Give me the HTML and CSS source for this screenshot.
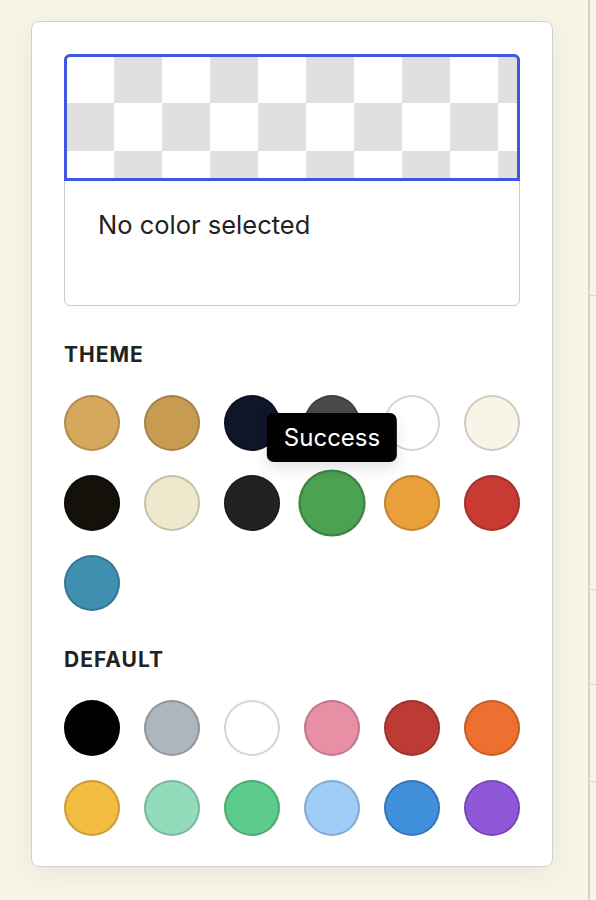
FILE: index.html
```html
<!DOCTYPE html>
<html lang="en">
<head>
    <meta charset="UTF-8">
    <meta name="viewport" content="width=device-width, initial-scale=1.0">
    <title>Color picker</title>
    <link rel="stylesheet" href="styles.css">
</head>
<body>
    <div class="popover">
        <div class="preview">
            <div class="preview-checker"></div>
            <div class="preview-label">No color selected</div>
        </div>

        <div class="section">
            <div class="section-title">THEME</div>
            <div class="swatches">
                <button class="swatch" style="--swatch: #d6a85e" title="Primary"></button>
                <button class="swatch" style="--swatch: #c89b52" title="Primary dark"></button>
                <button class="swatch" style="--swatch: #101629" title="Secondary"></button>
                <button class="swatch" style="--swatch: #4a4a4a" title="Neutral"></button>
                <button class="swatch" style="--swatch: #ffffff" title="Base"></button>
                <button class="swatch" style="--swatch: #f8f5e8" title="Base 2"></button>

                <button class="swatch" style="--swatch: #14110a" title="Base content"></button>
                <button class="swatch" style="--swatch: #efe8cc" title="Base 3"></button>
                <button class="swatch" style="--swatch: #222222" title="Dark"></button>
                <div class="swatch-wrap">
                    <button class="swatch is-hover" style="--swatch: #4ca152"></button>
                    <div class="tooltip">Success</div>
                </div>
                <button class="swatch" style="--swatch: #e9a03a" title="Warning"></button>
                <button class="swatch" style="--swatch: #c93a33" title="Error"></button>

                <button class="swatch" style="--swatch: #3f8fb0" title="Info"></button>
            </div>
        </div>

        <div class="section">
            <div class="section-title">DEFAULT</div>
            <div class="swatches">
                <button class="swatch" style="--swatch: #000000" title="Black"></button>
                <button class="swatch" style="--swatch: #adb5bf" title="Gray"></button>
                <button class="swatch" style="--swatch: #ffffff" title="White"></button>
                <button class="swatch" style="--swatch: #e88fa6" title="Pink"></button>
                <button class="swatch" style="--swatch: #bd3b36" title="Red"></button>
                <button class="swatch" style="--swatch: #ee7030" title="Orange"></button>

                <button class="swatch" style="--swatch: #f2bd42" title="Yellow"></button>
                <button class="swatch" style="--swatch: #94dbbc" title="Mint"></button>
                <button class="swatch" style="--swatch: #5ccb8c" title="Green"></button>
                <button class="swatch" style="--swatch: #9fcdf8" title="Light blue"></button>
                <button class="swatch" style="--swatch: #4090dc" title="Blue"></button>
                <button class="swatch" style="--swatch: #9057d8" title="Purple"></button>
            </div>
        </div>
    </div>

    <div class="sidebar">
        <div class="sidebar-row row-1"></div>
        <div class="sidebar-row row-2"></div>
        <div class="sidebar-row row-3"></div>
        <div class="sidebar-row row-4"></div>
    </div>
</body>
</html>
```

FILE: styles.css
```css
* {
    box-sizing: border-box;
}

body {
    font-family: Inter, 'Noto Sans', sans-serif;
    margin: 0;
    padding: 0;
    height: 100vh;
    overflow: hidden;
    background: #f8f5e8;
    color: #222222;
    display: flex;
}

/* Popover card */
.popover {
    flex: none;
    align-self: flex-start;
    width: 522px;
    margin: 21px 0 0 31px;
    padding: 32px 32px 30px 32px;
    background: #ffffff;
    border: 1px solid #cfcfcf;
    border-radius: 8px;
    box-shadow: 0 8px 30px rgba(60, 50, 20, 0.08);
}

/* Preview box */
.preview {
    height: 252px;
    border: 1px solid #c9c9c9;
    border-radius: 6px;
    display: flex;
    flex-direction: column;
}

.preview-checker {
    height: 127px;
    margin: -1px -1px 0 -1px;
    border: 3px solid #3d57e0;
    border-radius: 6px 6px 0 0;
    background-color: #ffffff;
    background-image: conic-gradient(#e0e0e0 0 25%, #ffffff 0 50%, #e0e0e0 0 75%, #ffffff 0);
    background-size: 96px 96px;
    background-position: -1px -2px;
}

.preview-label {
    padding: 29px 33px;
    font-size: 25.5px;
    line-height: 29px;
    color: #222222;
}

/* Sections */
.section {
    margin-top: 37px;
}

.section-title {
    font-size: 21px;
    line-height: 24px;
    font-weight: 700;
    letter-spacing: 1px;
    color: #222222;
    margin-bottom: 28px;
}

.swatches {
    display: grid;
    grid-template-columns: repeat(6, 56px);
    gap: 24px;
}

.swatch {
    width: 56px;
    height: 56px;
    padding: 0;
    border: none;
    border-radius: 50%;
    background: var(--swatch);
    box-shadow: inset 0 0 0 2px rgba(0, 0, 0, 0.17);
    cursor: pointer;
    display: block;
    transition: transform 0.15s ease-out;
}

.swatch.is-hover {
    transform: scale(1.2);
}

.swatch-wrap {
    position: relative;
    width: 56px;
    height: 56px;
}

/* Tooltip */
.tooltip {
    position: absolute;
    left: 50%;
    bottom: calc(100% + 13px);
    transform: translateX(-50%);
    height: 49px;
    padding: 0 17px;
    background: #000000;
    color: #ffffff;
    font-size: 24px;
    line-height: 49px;
    white-space: nowrap;
    border-radius: 7px;
    box-shadow: 0 6px 14px rgba(0, 0, 0, 0.12);
    z-index: 10;
}

/* Background panel on the right */
.sidebar {
    margin-left: auto;
    width: 8px;
    height: 100vh;
    border-left: 2px solid #d7d4c7;
    display: flex;
    flex-direction: column;
}

.sidebar-row {
    border-bottom: 1px solid #dcd9cc;
}

.row-1 { height: 296px; }
.row-2 { height: 294px; }
.row-3 { height: 95px; }
.row-4 { height: 97px; }
```
